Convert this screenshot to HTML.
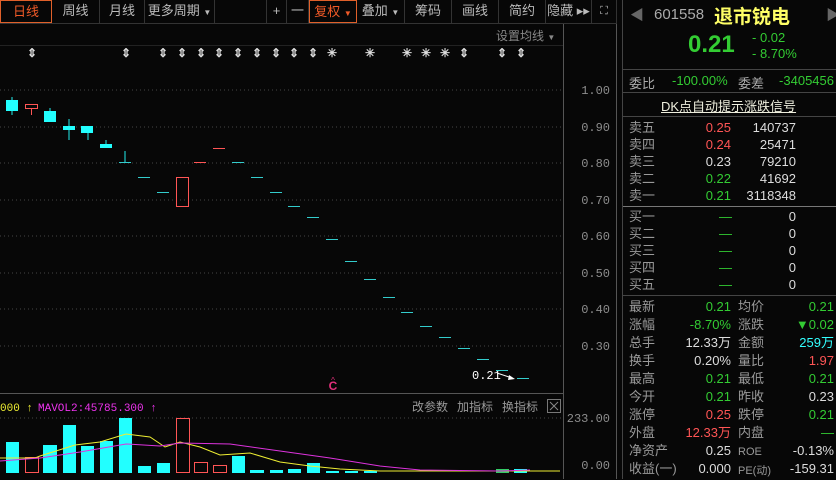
<!DOCTYPE html>
<html><head><meta charset="utf-8"><style>
*{margin:0;padding:0;box-sizing:border-box}
body{width:836px;height:479px;background:#070707;overflow:hidden;position:relative;font-family:"Liberation Sans","Noto Sans CJK SC",sans-serif;font-size:13px;color:#aaa}
.a{position:absolute;white-space:nowrap}
.tb{position:absolute;top:0;height:23px;line-height:22px;text-align:center;color:#bbb;border-right:1px solid #333;font-size:13px}
.o{color:#f05a28;border:1px solid #e0602a}
.g{color:#3c3}.r{color:#f55}.w{color:#ddd}.c{color:#3ff}
.rt{text-align:right}
</style></head><body>
<div class="tb o" style="left:0;width:52px">日线</div>
<div class="tb" style="left:52px;width:48px">周线</div>
<div class="tb" style="left:100px;width:45px">月线</div>
<div class="tb" style="left:145px;width:70px">更多周期 <span style="font-size:8px">▼</span></div>
<div class="tb" style="left:266px;width:21px;border-left:1px solid #333">+</div>
<div class="tb" style="left:287px;width:22px">一</div>
<div class="tb o" style="left:309px;width:48px">复权 <span style="font-size:8px">▼</span></div>
<div class="tb" style="left:357px;width:48px">叠加 <span style="font-size:8px">▼</span></div>
<div class="tb" style="left:405px;width:47px">筹码</div>
<div class="tb" style="left:452px;width:47px">画线</div>
<div class="tb" style="left:499px;width:47px">简约</div>
<div class="tb" style="left:546px;width:46px">隐藏 ▸▸</div>
<div class="tb" style="left:592px;width:25px;font-size:11px">⛶</div>
<div class="a" style="left:0;top:23px;width:617px;height:1px;background:#333"></div>
<div class="a" style="left:496px;top:27px;color:#888;font-size:12px">设置均线 <span style="font-size:8px">▼</span></div>
<div class="a" style="left:0;top:45px;width:563px;height:1px;background:#222"></div>
<svg class="a" style="left:0;top:0" width="622" height="479">
<g stroke="#444" stroke-dasharray="1 3">
<line x1="0" y1="90" x2="563" y2="90"/><line x1="0" y1="127" x2="563" y2="127"/><line x1="0" y1="163" x2="563" y2="163"/><line x1="0" y1="200" x2="563" y2="200"/><line x1="0" y1="236" x2="563" y2="236"/><line x1="0" y1="273" x2="563" y2="273"/><line x1="0" y1="309" x2="563" y2="309"/><line x1="0" y1="346" x2="563" y2="346"/><line x1="0" y1="418" x2="563" y2="418"/>
</g>
<g stroke="#555"><line x1="563.5" y1="24" x2="563.5" y2="479"/><line x1="616.5" y1="24" x2="616.5" y2="479"/><line x1="0" y1="393.5" x2="563" y2="393.5"/></g>
<g fill="#8d8d8d" font-family="Liberation Mono" font-size="12" text-anchor="end">
<text x="610" y="94">1.00</text><text x="610" y="131">0.90</text><text x="610" y="167">0.80</text><text x="610" y="204">0.70</text><text x="610" y="240">0.60</text><text x="610" y="277">0.50</text><text x="610" y="313">0.40</text><text x="610" y="350">0.30</text><text x="610" y="422">233.00</text><text x="610" y="469">0.00</text>
</g>
<g fill="#ddd" font-size="12" font-weight="bold" text-anchor="middle">
<text x="32" y="57">⇕</text><text x="126" y="57">⇕</text><text x="163" y="57">⇕</text><text x="182" y="57">⇕</text><text x="201" y="57">⇕</text><text x="219" y="57">⇕</text><text x="238" y="57">⇕</text><text x="257" y="57">⇕</text><text x="276" y="57">⇕</text><text x="294" y="57">⇕</text><text x="313" y="57">⇕</text><text x="332" y="57">✳</text><text x="370" y="57">✳</text><text x="407" y="57">✳</text><text x="426" y="57">✳</text><text x="445" y="57">✳</text><text x="464" y="57">⇕</text><text x="502" y="57">⇕</text><text x="521" y="57">⇕</text>
</g>
<g stroke="#2ee" fill="#2ff">
<line x1="12" y1="97" x2="12" y2="115"/><rect x="6" y="100" width="12" height="11" stroke="none"/>
<line x1="50" y1="108" x2="50" y2="112"/><rect x="44" y="111" width="12" height="11" stroke="none"/>
<line x1="69" y1="119" x2="69" y2="140"/><rect x="63" y="126" width="12" height="4" stroke="none"/>
<line x1="88" y1="130" x2="88" y2="140"/><rect x="81" y="126" width="12" height="7" stroke="none"/>
<line x1="106" y1="140" x2="106" y2="145"/><rect x="100" y="144" width="12" height="4" stroke="none"/>
<line x1="125" y1="151" x2="125" y2="162"/>
</g>
<g stroke="#3cc">
<line x1="119" y1="162.5" x2="131" y2="162.5"/><line x1="138" y1="177.5" x2="150" y2="177.5"/><line x1="157" y1="192.5" x2="169" y2="192.5"/><line x1="232" y1="162.5" x2="244" y2="162.5"/><line x1="251" y1="177.5" x2="263" y2="177.5"/><line x1="270" y1="192.5" x2="282" y2="192.5"/><line x1="288" y1="206.5" x2="300" y2="206.5"/><line x1="307" y1="217.5" x2="319" y2="217.5"/><line x1="326" y1="239.5" x2="338" y2="239.5"/><line x1="345" y1="261.5" x2="357" y2="261.5"/><line x1="364" y1="279.5" x2="376" y2="279.5"/><line x1="383" y1="297.5" x2="395" y2="297.5"/><line x1="401" y1="312.5" x2="413" y2="312.5"/><line x1="420" y1="326.5" x2="432" y2="326.5"/><line x1="439" y1="337.5" x2="451" y2="337.5"/><line x1="458" y1="348.5" x2="470" y2="348.5"/><line x1="477" y1="359.5" x2="489" y2="359.5"/><line x1="496" y1="370.5" x2="508" y2="370.5"/><line x1="517" y1="378.5" x2="529" y2="378.5"/>
</g>
<g stroke="#f55" fill="none">
<rect x="25.5" y="104.5" width="12" height="4"/><line x1="31.5" y1="108" x2="31.5" y2="115"/>
<rect x="176.5" y="177.5" width="12" height="29"/>
<line x1="194" y1="162.5" x2="206" y2="162.5"/><line x1="213" y1="148.5" x2="225" y2="148.5"/>
</g>
<text x="472" y="379" fill="#fff" font-size="12" font-family="Liberation Mono">0.21</text>
<path d="M497 373 L512 378" stroke="#fff"/><path d="M509 375 L515 379 L508 380Z" fill="#fff"/>
<text x="333" y="390" fill="#e0307a" font-size="12" text-anchor="middle" font-weight="bold">C</text>
<text x="333" y="383" fill="#e0307a" font-size="8" text-anchor="middle">^</text>
<text x="0" y="411" fill="#ee3" font-size="11" font-family="Liberation Mono">000 ↑</text>
<text x="38" y="411" fill="#e3e" font-size="11" font-family="Liberation Mono">MAVOL2:45785.300 ↑</text>
<text x="412" y="411" fill="#999" font-size="12">改参数</text><text x="457" y="411" fill="#999" font-size="12">加指标</text><text x="502" y="411" fill="#999" font-size="12">换指标</text>
<rect x="547.5" y="399.5" width="13" height="13" fill="none" stroke="#777"/><path d="M550 402l8 8M558 402l-8 8" stroke="#888"/>
<g fill="#2ff">
<rect x="6" y="442" width="13" height="31"/><rect x="43" y="445" width="14" height="28"/><rect x="63" y="425" width="13" height="48"/><rect x="81" y="446" width="13" height="27"/><rect x="100" y="441" width="13" height="32"/><rect x="119" y="418" width="13" height="55"/><rect x="138" y="466" width="13" height="7"/><rect x="157" y="463" width="13" height="10"/><rect x="232" y="456" width="13" height="17"/><rect x="250" y="470" width="14" height="3"/><rect x="270" y="470" width="13" height="3"/><rect x="288" y="469" width="13" height="4"/><rect x="307" y="463" width="13" height="10"/><rect x="326" y="471" width="13" height="2"/><rect x="345" y="471" width="13" height="2"/><rect x="364" y="471" width="13" height="2"/><rect x="514" y="469" width="13" height="4"/>
<rect x="496" y="469" width="13" height="4" fill="#3c6"/>
</g>
<g fill="none" stroke="#f55"><rect x="25.5" y="457.5" width="13" height="15"/><rect x="176.5" y="418.5" width="13" height="54"/><rect x="194.5" y="462.5" width="13" height="10"/><rect x="213.5" y="465.5" width="13" height="7"/></g>
<polyline fill="none" stroke="#ee3" points="0,458 35,458 40,456 75,445 100,442 126,434 150,437 165,447 180,442 200,447 220,455 250,453 280,462 310,466 340,469 380,471 560,471"/>
<polyline fill="none" stroke="#d3d" points="0,461 40,458 80,452 126,444 160,446 180,443 230,444 280,451 330,458 380,466 420,470 500,471 530,470"/>
</svg>
<div class="a" style="left:622px;top:0;width:1px;height:479px;background:#444"></div>
<div class="a" style="left:630px;top:5px;color:#666;font-size:14px">◀</div>
<div class="a" style="left:826px;top:5px;color:#666;font-size:14px">▶</div>
<div class="a" style="left:654px;top:6px;color:#aaa;font-size:15px">601558</div>
<div class="a" style="left:714px;top:2px;color:#ff6;font-size:19px;font-weight:bold">退市锐电</div>
<div class="a g" style="left:688px;top:31px;font-size:24px;font-weight:bold">0.21</div>
<div class="a g" style="left:752px;top:30px;font-size:13px">- 0.02</div>
<div class="a g" style="left:752px;top:46px;font-size:13px">- 8.70%</div>
<div class="a" style="left:623px;top:69px;width:213px;height:1px;background:#444"></div>
<div class="a" style="left:629px;top:73px">委比</div><div class="a g" style="left:672px;top:73px">-100.00%</div>
<div class="a" style="left:738px;top:73px">委差</div><div class="a g rt" style="right:2px;top:73px">-3405456</div>
<div class="a" style="left:623px;top:92px;width:213px;height:1px;background:#444"></div>
<div class="a" style="left:661px;top:96px;color:#eed;text-decoration:underline">DK点自动提示涨跌信号</div>
<div class="a" style="left:623px;top:116px;width:213px;height:1px;background:#444"></div>
<div class="a" style="left:623px;top:206px;width:213px;height:1px;background:#777"></div>
<div class="a" style="left:623px;top:295px;width:213px;height:1px;background:#444"></div>
<div class="a" style="left:629px;top:119px;line-height:17px;color:#999">卖五<br>卖四<br>卖三<br>卖二<br>卖一</div>
<div class="a rt" style="right:105px;top:119px;line-height:17px"><span class="r">0.25</span><br><span class="r">0.24</span><br><span class="w">0.23</span><br><span class="g">0.22</span><br><span class="g">0.21</span></div>
<div class="a rt w" style="right:40px;top:119px;line-height:17px">140737<br>25471<br>79210<br>41692<br>3118348</div>
<div class="a" style="left:629px;top:208px;line-height:17px;color:#999">买一<br>买二<br>买三<br>买四<br>买五</div>
<div class="a rt g" style="right:104px;top:208px;line-height:17px">—<br>—<br>—<br>—<br>—</div>
<div class="a rt w" style="right:40px;top:208px;line-height:17px">0<br>0<br>0<br>0<br>0</div>
<div class="a" style="left:629px;top:298px;line-height:18px;color:#999">最新<br>涨幅<br>总手<br>换手<br>最高<br>今开<br>涨停<br>外盘<br>净资产<br>收益(一)</div>
<div class="a rt" style="right:105px;top:298px;line-height:18px"><span class="g">0.21</span><br><span class="g">-8.70%</span><br><span class="w">12.33万</span><br><span class="w">0.20%</span><br><span class="g">0.21</span><br><span class="g">0.21</span><br><span class="r">0.25</span><br><span class="r">12.33万</span><br><span class="w">0.25</span><br><span class="w">0.000</span></div>
<div class="a" style="left:738px;top:298px;line-height:18px;color:#999">均价<br>涨跌<br>金额<br>量比<br>最低<br>昨收<br>跌停<br>内盘<br><span style="font-size:11px">ROE</span><br><span style="font-size:11px">PE(动)</span></div>
<div class="a rt" style="right:2px;top:298px;line-height:18px"><span class="g">0.21</span><br><span class="g">▼0.02</span><br><span class="c">259万</span><br><span class="r">1.97</span><br><span class="g">0.21</span><br><span class="w">0.23</span><br><span class="g">0.21</span><br><span class="g">—</span><br><span class="w">-0.13%</span><br><span class="w">-159.31</span></div>
</body></html>
